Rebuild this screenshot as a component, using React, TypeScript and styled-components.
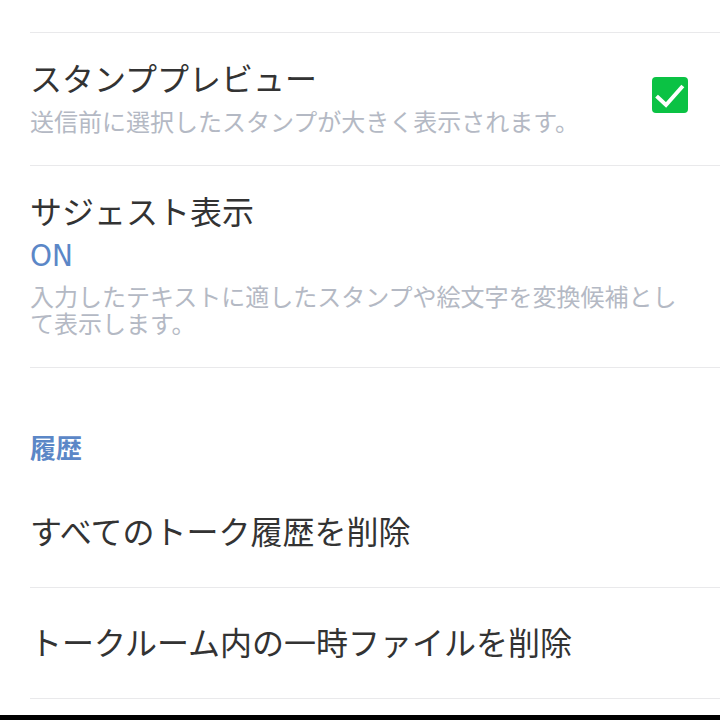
import React from "react";
import styled, {createGlobalStyle} from "styled-components";

const GlobalStyle = createGlobalStyle`
	html, body {
		margin: 0;
		padding: 0;
		background: #ffffff;
	}
	body {
		font-family: "Noto Sans CJK JP", "Noto Sans", sans-serif;
	}
`;

const colors = {
	title: "#333333",
	sub: "#b4b9c4",
	accent: "#5b87c7",
	line: "#e9e9eb",
	green: "#0bc244",
};

type Item = {
	title: string;
	value?: string;
	desc?: string;
	checked?: boolean;
};

const talkItems: Item[] = [
	{
		title: "スタンププレビュー",
		desc: "送信前に選択したスタンプが大きく表示されます。",
		checked: true,
	},
	{
		title: "サジェスト表示",
		value: "ON",
		desc: "入力したテキストに適したスタンプや絵文字を変換候補として表示します。",
	},
];

const historyItems: Item[] = [
	{title: "すべてのトーク履歴を削除"},
	{title: "トークルーム内の一時ファイルを削除"},
];

const Check = () => (
	<CheckBox>
		<svg width="36" height="36" viewBox="0 0 36 36">
			<path d="M6 20.5 L14 28 L29.5 10.5" fill="none" stroke="#fff" strokeWidth="4" strokeLinecap="square" />
		</svg>
	</CheckBox>
);

const SettingRow = ({item}: {item: Item}) => (
	<Row $compact={!item.desc}>
		<TextBlock>
			<Title>{item.title}</Title>
			{item.value && <Value>{item.value}</Value>}
			{item.desc && <Desc>{item.desc}</Desc>}
		</TextBlock>
		{item.checked && <Check />}
	</Row>
);

export default function App() {
	return (
		<>
			<GlobalStyle />
			<Screen>
				<Scroll>
					{/* previous row, scrolled almost out of view */}
					<Clipped>
						<Row $tail>
							<TextBlock>
								<Title>URLプレビュー</Title>
								<Desc>トーク内のURLのプレビューを表示します。一部のURLを除く。</Desc>
							</TextBlock>
						</Row>
					</Clipped>
					{talkItems.map((item) => (
						<SettingRow key={item.title} item={item} />
					))}
					<SectionHeader>履歴</SectionHeader>
					{historyItems.map((item) => (
						<SettingRow key={item.title} item={item} />
					))}
				</Scroll>
				<NavBar />
			</Screen>
		</>
	);
}

const Screen = styled.div`
	width: 720px;
	height: 720px;
	display: flex;
	flex-direction: column;
	overflow: hidden;
	background: #fff;
`;

const Scroll = styled.div`
	flex: 1;
	overflow: hidden;
	display: flex;
	flex-direction: column;
`;

const Clipped = styled.div`
	height: 33px;
	flex-shrink: 0;
	overflow: hidden;
	display: flex;
	flex-direction: column;
	justify-content: flex-end;
`;

const Row = styled.div<{$compact?: boolean; $tail?: boolean}>`
	flex-shrink: 0;
	margin-left: 30px;
	padding: ${(p) => (p.$compact ? "31px 30px 35px 0" : p.$tail ? "22px 32px 34px 0" : "22px 32px 31px 0")};
	border-bottom: 1px solid ${colors.line};
	display: flex;
	align-items: center;
	gap: 20px;
`;

const TextBlock = styled.div`
	flex: 1;
	display: flex;
	flex-direction: column;
`;

const Title = styled.div`
	font-size: 32px;
	line-height: 44px;
	color: ${colors.title};
`;

const Value = styled.div`
	font-family: "DejaVu Sans Condensed", "Noto Sans CJK JP", sans-serif;
	font-size: 31px;
	line-height: 38px;
	color: ${colors.accent};
	margin-top: 4px;
`;

const Desc = styled.div`
	font-size: 24px;
	line-height: 27px;
	color: ${colors.sub};
	margin-top: 8px;
	max-width: 660px;
`;

const CheckBox = styled.div`
	width: 36px;
	height: 36px;
	border-radius: 4px;
	background: ${colors.green};
	flex-shrink: 0;
	display: flex;
	svg {
		display: block;
	}
`;

const SectionHeader = styled.div`
	flex-shrink: 0;
	padding: 61px 30px 12px;
	font-size: 26px;
	line-height: 36px;
	font-weight: 700;
	color: ${colors.accent};
`;

const NavBar = styled.div`
	height: 5px;
	flex-shrink: 0;
	background: #000;
`;
